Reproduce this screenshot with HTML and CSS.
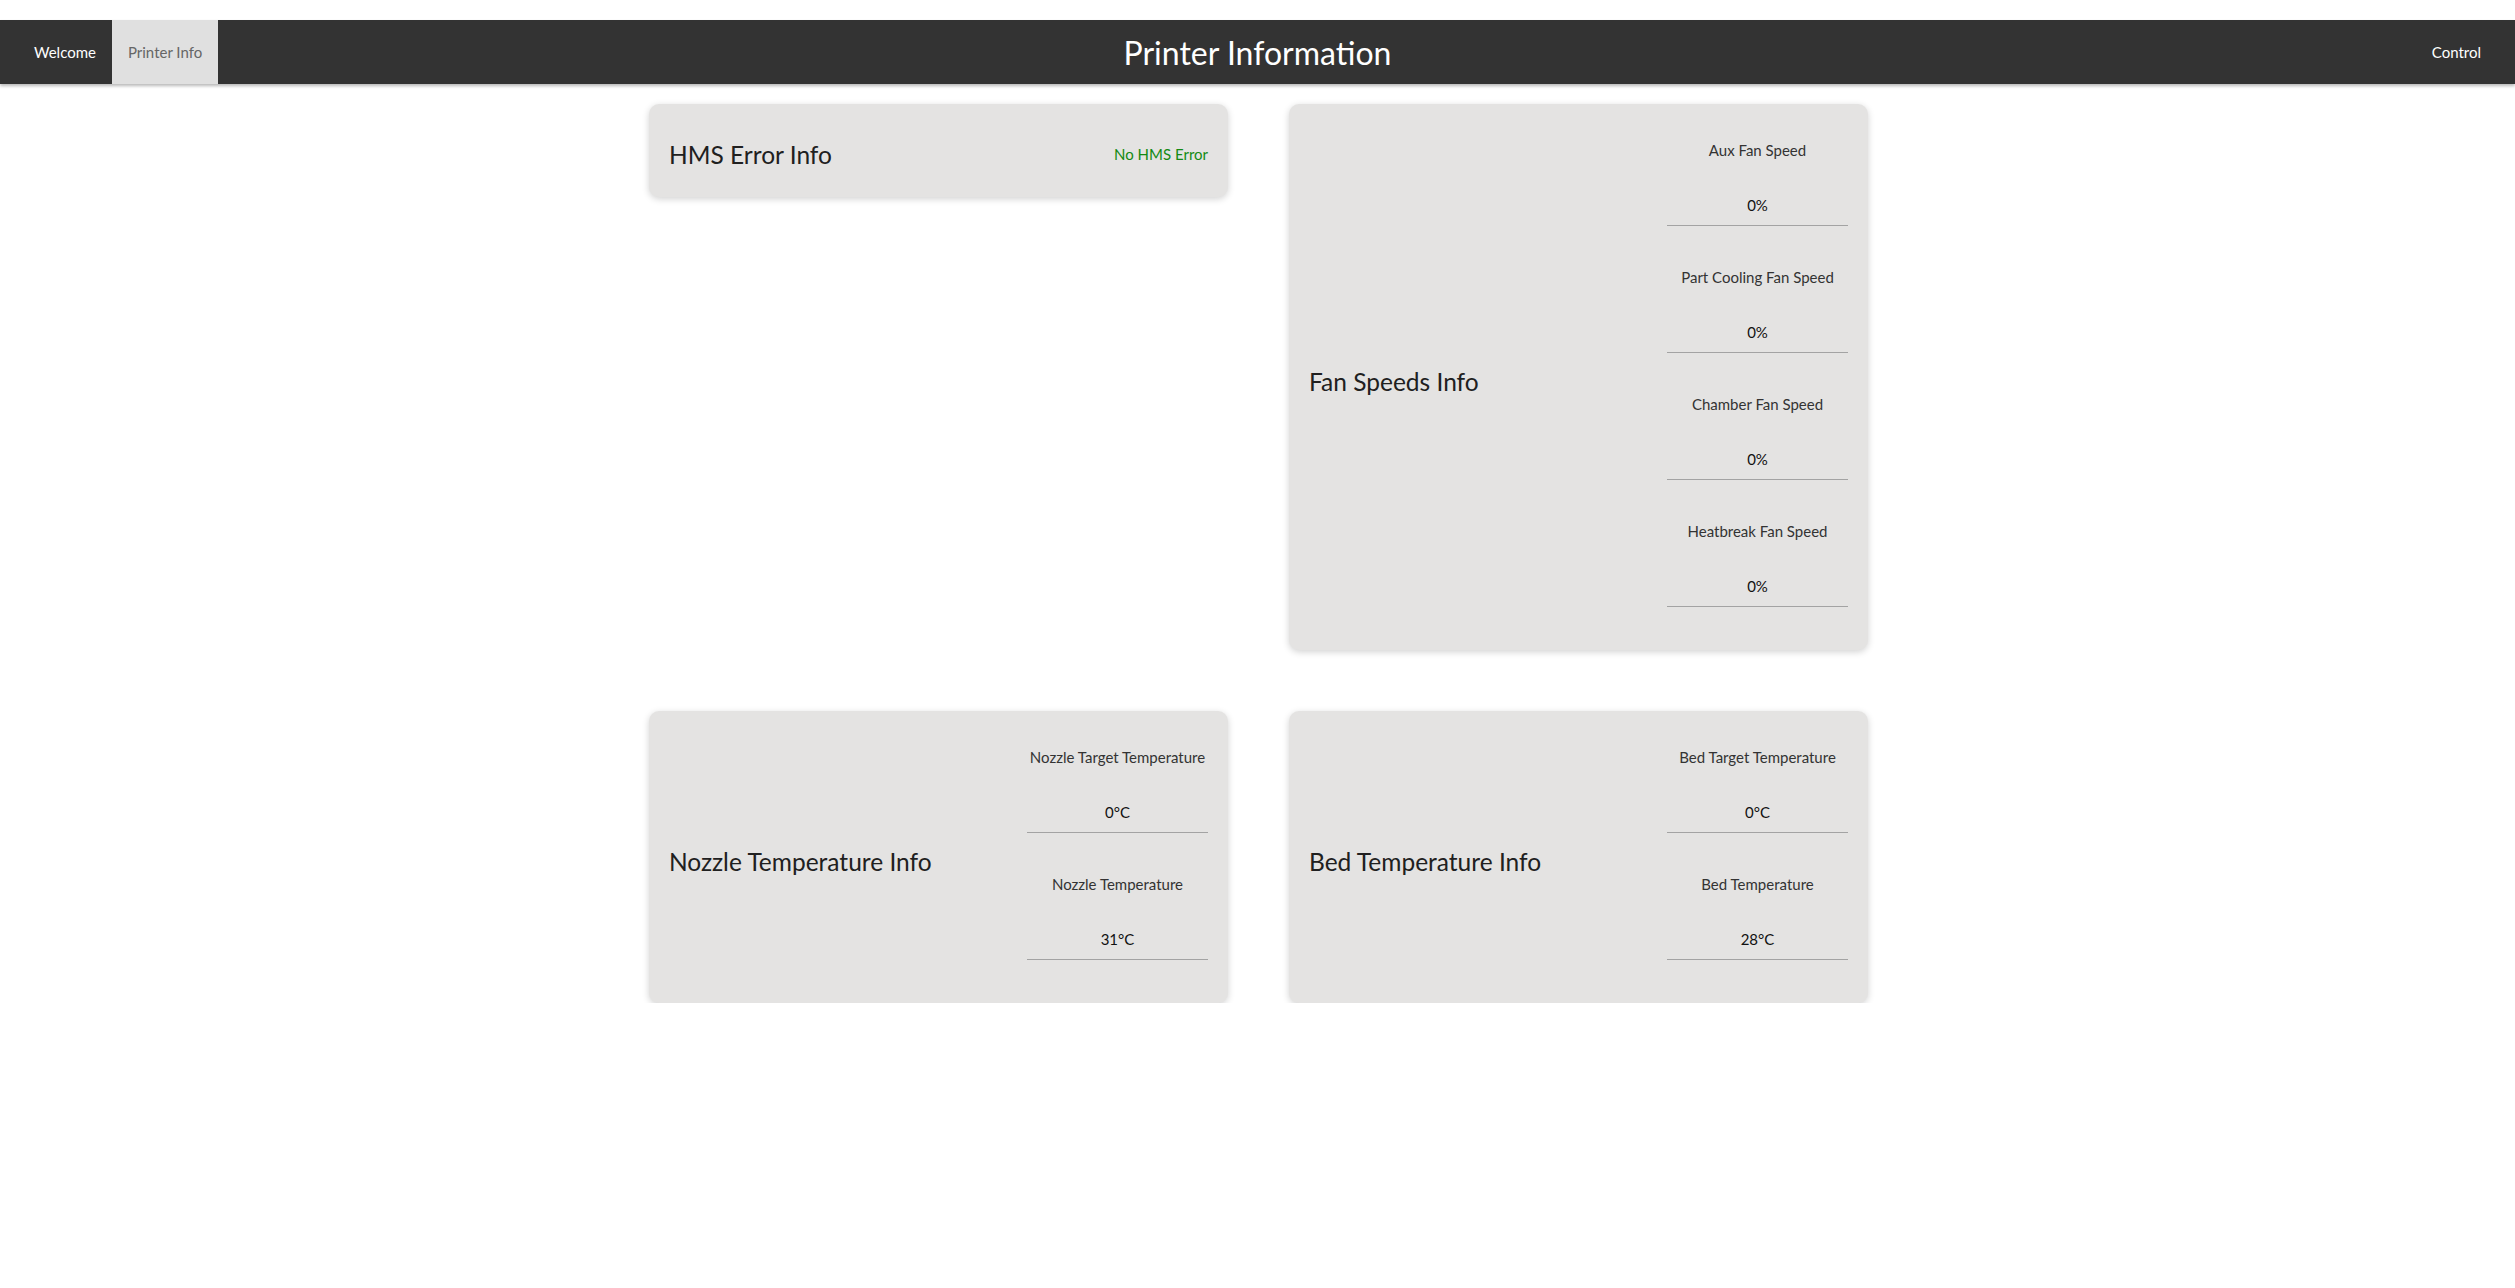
FILE: index.html
```html
<!DOCTYPE html>
<html lang="en">
<head>
<meta charset="utf-8">
<title>Printer Information</title>
<link rel="stylesheet" href="styles.css">
</head>
<body>
<div class="page">
  <nav class="navbar">
    <div class="nav-left">
      <a class="nav-link" href="#">Welcome</a>
      <a class="nav-link active" href="#">Printer Info</a>
    </div>
    <h1 class="nav-title">Printer Information</h1>
    <div class="nav-right">
      <a class="nav-link" href="#">Control</a>
    </div>
  </nav>

  <main class="grid">
    <section class="card card-compact">
      <h2 class="card-title">HMS Error Info</h2>
      <p class="status">No HMS Error</p>
    </section>

    <section class="card">
      <h2 class="card-title">Fan Speeds Info</h2>
      <div class="fields">
        <div class="field"><div class="field-label">Aux Fan Speed</div><div class="field-value">0%</div></div>
        <div class="field"><div class="field-label">Part Cooling Fan Speed</div><div class="field-value">0%</div></div>
        <div class="field"><div class="field-label">Chamber Fan Speed</div><div class="field-value">0%</div></div>
        <div class="field"><div class="field-label">Heatbreak Fan Speed</div><div class="field-value">0%</div></div>
      </div>
    </section>

    <section class="card">
      <h2 class="card-title">Nozzle Temperature Info</h2>
      <div class="fields">
        <div class="field"><div class="field-label">Nozzle Target Temperature</div><div class="field-value">0°C</div></div>
        <div class="field"><div class="field-label">Nozzle Temperature</div><div class="field-value">31°C</div></div>
      </div>
    </section>

    <section class="card">
      <h2 class="card-title">Bed Temperature Info</h2>
      <div class="fields">
        <div class="field"><div class="field-label">Bed Target Temperature</div><div class="field-value">0°C</div></div>
        <div class="field"><div class="field-label">Bed Temperature</div><div class="field-value">28°C</div></div>
      </div>
    </section>
  </main>
</div>
</body>
</html>
```
FILE: styles.css
```css
* { box-sizing: border-box; }

html, body {
  margin: 0;
  padding: 0;
  background: #ffffff;
  font-family: Lato, "Open Sans", "Liberation Sans", sans-serif;
  color: #222;
}

.page {
  padding-top: 20px;
}

.navbar {
  display: grid;
  grid-template-columns: 1fr auto 1fr;
  align-items: stretch;
  height: 64px;
  padding: 0 18px;
  background: #333333;
  box-shadow: 0 2px 3px rgba(0, 0, 0, 0.28);
}

.nav-left {
  display: flex;
  align-items: stretch;
}

.nav-right {
  display: flex;
  justify-content: flex-end;
  align-items: stretch;
}

.nav-link {
  display: flex;
  align-items: center;
  padding: 0 16px;
  font-size: 15px;
  color: #ffffff;
  text-decoration: none;
}

.nav-link.active {
  background: #e0e0e0;
  color: #666666;
}

.nav-title {
  margin: 0;
  align-self: center;
  font-size: 32px;
  font-weight: 400;
  color: #ffffff;
  line-height: 40px;
  padding-top: 2px;
}

.grid {
  display: grid;
  grid-template-columns: 579px 579px;
  column-gap: 61px;
  row-gap: 61px;
  justify-content: center;
  align-items: start;
  margin: 20px 0 0 2px;
}

.card {
  display: flex;
  align-items: center;
  justify-content: space-between;
  padding: 19px 20px;
  background: #e4e3e2;
  border-radius: 10px;
  box-shadow: 0 2px 7px rgba(0, 0, 0, 0.18);
}

.card-title {
  margin: 0;
  padding-top: 8px;
  font-size: 24.5px;
  font-weight: 400;
  line-height: 47px;
  color: #202020;
}

.status {
  margin: 0;
  padding-top: 8px;
  line-height: 47px;
  font-size: 15px;
  color: #138a13;
}

.fields {
  width: 181px;
  display: flex;
  flex-direction: column;
}

.field {
  padding: 17px 0 10px;
  margin-bottom: 24px;
  border-bottom: 1px solid #a3a3a3;
  text-align: center;
}

.field-label {
  font-size: 15px;
  line-height: 20px;
  color: #333333;
}

.field-value {
  margin-top: 35px;
  font-size: 15px;
  line-height: 20px;
  color: #111111;
}
```
